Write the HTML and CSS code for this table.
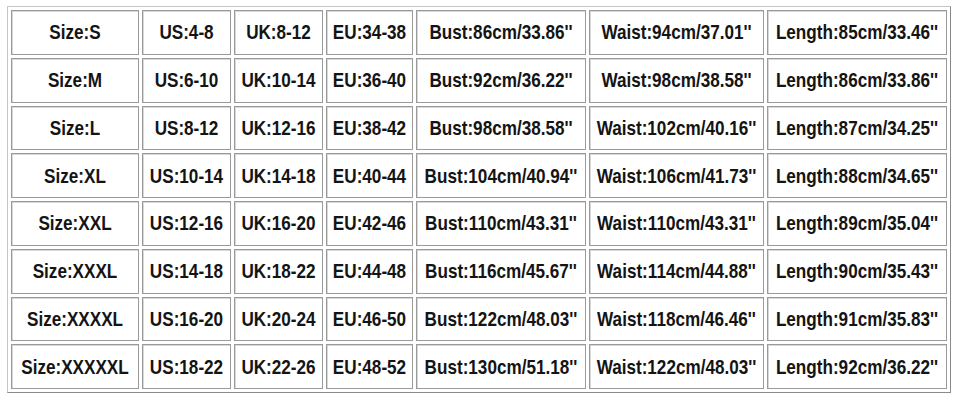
FILE: index.html
```html
<!DOCTYPE html>
<html>
<head>
<meta charset="utf-8">
<link rel="stylesheet" href="styles.css">
</head>
<body>
<table class="chart">
<colgroup>
<col class="c-size"><col class="c-us"><col class="c-uk"><col class="c-eu"><col class="c-bust"><col class="c-waist"><col class="c-len">
</colgroup>
<tbody>
<tr><td><span>Size:S</span></td><td><span>US:4-8</span></td><td><span>UK:8-12</span></td><td><span>EU:34-38</span></td><td><span>Bust:86cm/33.86''</span></td><td><span>Waist:94cm/37.01''</span></td><td><span>Length:85cm/33.46''</span></td></tr>
<tr><td><span>Size:M</span></td><td><span>US:6-10</span></td><td><span>UK:10-14</span></td><td><span>EU:36-40</span></td><td><span>Bust:92cm/36.22''</span></td><td><span>Waist:98cm/38.58''</span></td><td><span>Length:86cm/33.86''</span></td></tr>
<tr><td><span>Size:L</span></td><td><span>US:8-12</span></td><td><span>UK:12-16</span></td><td><span>EU:38-42</span></td><td><span>Bust:98cm/38.58''</span></td><td><span>Waist:102cm/40.16''</span></td><td><span>Length:87cm/34.25''</span></td></tr>
<tr><td><span>Size:XL</span></td><td><span>US:10-14</span></td><td><span>UK:14-18</span></td><td><span>EU:40-44</span></td><td><span>Bust:104cm/40.94''</span></td><td><span>Waist:106cm/41.73''</span></td><td><span>Length:88cm/34.65''</span></td></tr>
<tr><td><span>Size:XXL</span></td><td><span>US:12-16</span></td><td><span>UK:16-20</span></td><td><span>EU:42-46</span></td><td><span>Bust:110cm/43.31''</span></td><td><span>Waist:110cm/43.31''</span></td><td><span>Length:89cm/35.04''</span></td></tr>
<tr><td><span>Size:XXXL</span></td><td><span>US:14-18</span></td><td><span>UK:18-22</span></td><td><span>EU:44-48</span></td><td><span>Bust:116cm/45.67''</span></td><td><span>Waist:114cm/44.88''</span></td><td><span>Length:90cm/35.43''</span></td></tr>
<tr><td><span>Size:XXXXL</span></td><td><span>US:16-20</span></td><td><span>UK:20-24</span></td><td><span>EU:46-50</span></td><td><span>Bust:122cm/48.03''</span></td><td><span>Waist:118cm/46.46''</span></td><td><span>Length:91cm/35.83''</span></td></tr>
<tr><td><span>Size:XXXXXL</span></td><td><span>US:18-22</span></td><td><span>UK:22-26</span></td><td><span>EU:48-52</span></td><td><span>Bust:130cm/51.18''</span></td><td><span>Waist:122cm/48.03''</span></td><td><span>Length:92cm/36.22''</span></td></tr>
</tbody>
</table>
</body>
</html>
```
FILE: styles.css
```css
html, body {
  margin: 0;
  padding: 0;
  background: #ffffff;
}
body {
  padding: 6px 0 0 7px;
}
.chart {
  table-layout: fixed;
  border-collapse: separate;
  border-spacing: 3px;
  width: 943px;
  border: 1px solid;
  border-color: #c4c4c4 #8a8a8a #8a8a8a #c4c4c4;
  font-family: "Liberation Sans", Arial, sans-serif;
  font-weight: bold;
  font-size: 21px;
  color: #141414;
}
.c-size { width: 128px; }
.c-us { width: 89px; }
.c-uk { width: 89px; }
.c-eu { width: 87px; }
.c-bust { width: 170px; }
.c-waist { width: 175px; }
.c-len { width: 180px; }
.chart td {
  box-sizing: border-box;
  height: 44.75px;
  padding: 0;
  border: 1px solid #9a9a9a;
  box-shadow: inset 1px 1px 0 #d8d8d8;
  text-align: center;
  vertical-align: middle;
  white-space: nowrap;
  overflow: visible;
}
.chart td span {
  display: block;
  margin: 0 -40px;
  text-align: center;
  transform: scaleX(0.815);
}
```
